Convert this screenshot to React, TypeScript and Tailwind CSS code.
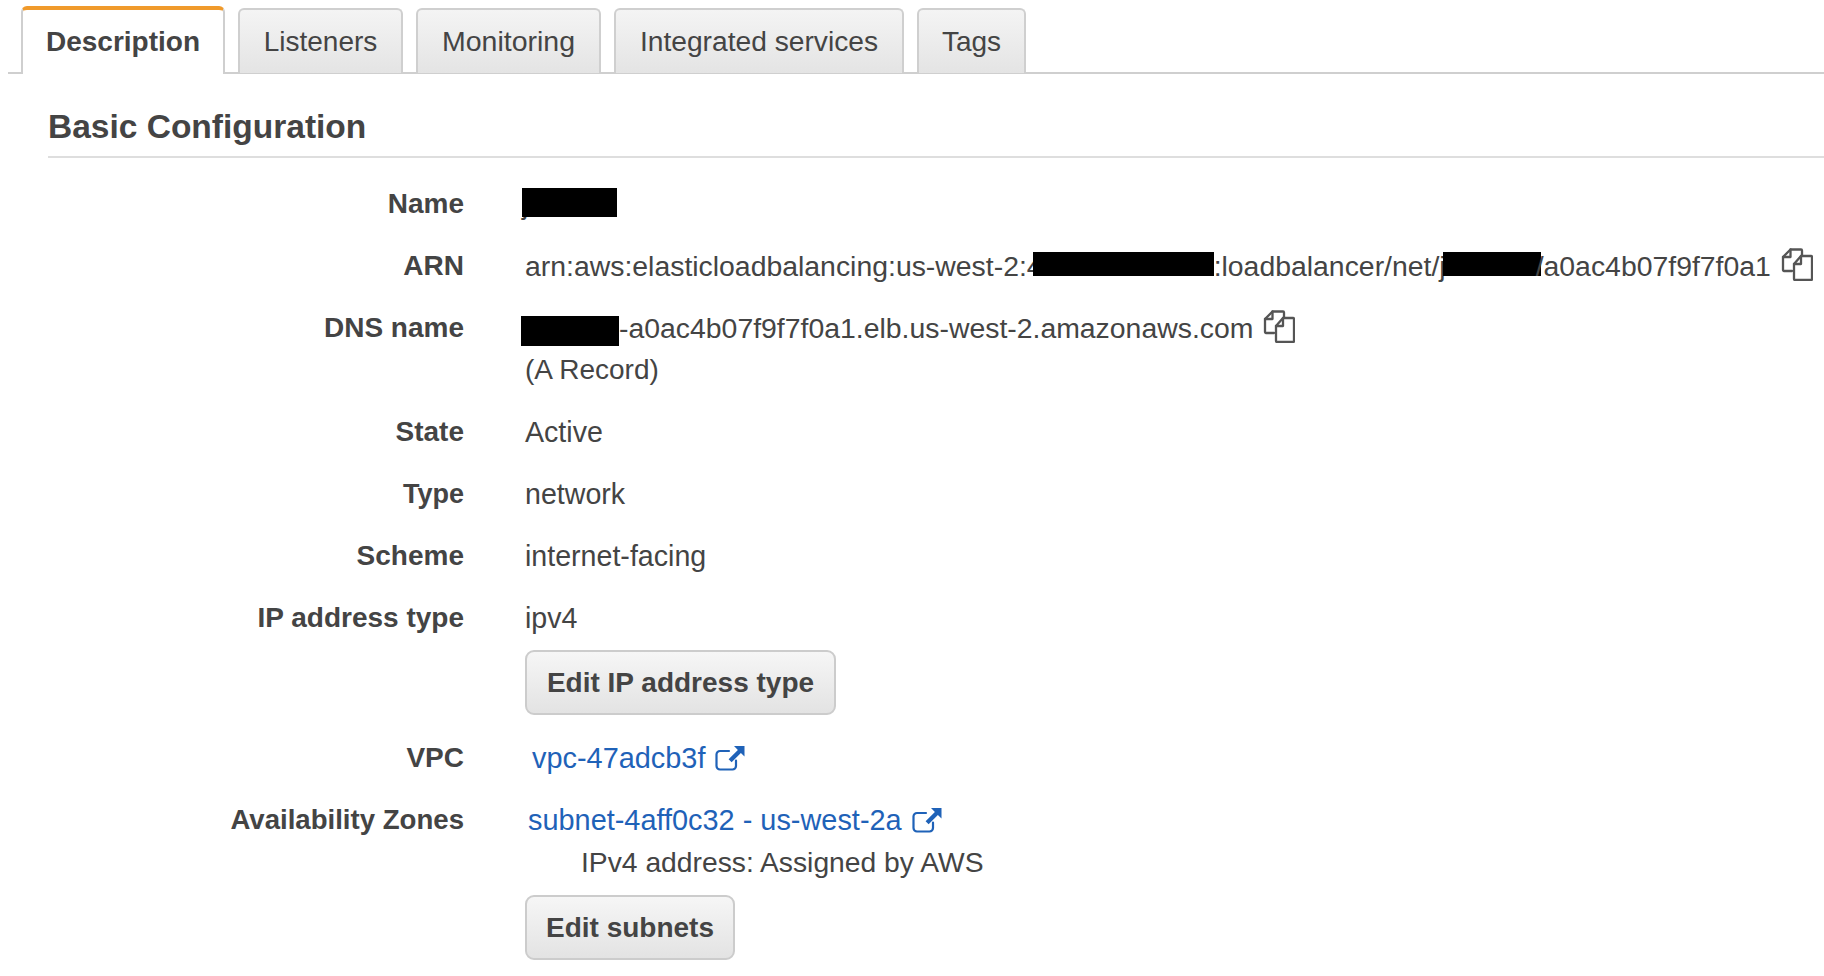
const Copy = ({ className }: { className: string }) => (
  <svg className={className} viewBox="0 0 32 33" fill="none" stroke="#555" strokeWidth="2.3" strokeLinejoin="round" strokeLinecap="round">
    <path d="M11 23H3a1 1 0 0 1-1-1V9l7.5-7.5H20a1 1 0 0 1 1 1V7" />
    <path d="M9.5 1.5V9H2" />
    <path d="M20 8h10a1 1 0 0 1 1 1v22a1 1 0 0 1-1 1H14a1 1 0 0 1-1-1V16z" />
    <path d="M20 8v8h-7" />
  </svg>
);

const External = () => (
  <svg className="ml-[10px] w-[30px] h-[25px] shrink-0" viewBox="0 0 30 25" fill="none">
    <path d="M21 14.5v5.5a3.5 3.5 0 0 1-3.5 3.5H5a3.5 3.5 0 0 1-3.5-3.5V8.5A3.5 3.5 0 0 1 5 5h9" stroke="#1f62b8" strokeWidth="2.2" strokeLinecap="round" />
    <path d="M19 0h10.5v10.5l-3.6-3.6-9.3 9.3-3-3 9.3-9.3z" fill="#1f62b8" />
  </svg>
);

const Tab = ({ children, w, size }: { children: string; w: string; size: string }) => (
  <div className={`${w} ${size} h-[65px] mt-[8px] box-border flex items-center justify-center rounded-t-[6px] border-2 border-b-0 border-[#cfcfcf] bg-gradient-to-b from-[#f4f4f4] to-[#e4e4e4] text-[#444]`}>
    {children}
  </div>
);

const Row = ({ label, size = "text-[28px]", children }: { label: string; size?: string; children: React.ReactNode }) => (
  <div className="flex py-[10px] leading-[42px]">
    <div className={`w-[464px] shrink-0 text-right font-bold ${size}`}>{label}</div>
    <div className="pl-[61px] whitespace-nowrap min-w-0">{children}</div>
  </div>
);

const Bar = ({ cls }: { cls: string }) => (
  <span className={`block bg-black self-start shrink-0 ${cls}`} />
);

const Btn = ({ children, w, mt }: { children: string; w: string; mt: string }) => (
  <div className={`${w} ${mt} h-[65px] box-border flex items-center justify-center rounded-[9px] border-2 border-[#cccccc] bg-gradient-to-b from-[#f6f6f6] to-[#e3e3e3] font-bold text-[28px] text-[#444]`}>
    {children}
  </div>
);

export default function App() {
  return (
    <div className="w-[1824px] h-[976px] overflow-hidden bg-white text-[#444] text-[28.4px] font-['Liberation_Sans',Arial,sans-serif]">
      <div className="ml-[8px] h-[74px] flex gap-[13px] pl-[13px] border-b-2 border-[#cfcfcf] box-border">
        <div className="w-[204px] h-[68px] mt-[6px] box-border flex items-center justify-center rounded-t-[6px] border-x-2 border-t-4 border-[#cfcfcf] border-t-[#f09a2b] bg-white font-bold text-[28px]">
          Description
        </div>
        <Tab w="w-[165px]" size="text-[28px]">Listeners</Tab>
        <Tab w="w-[185px]" size="text-[28.5px]">Monitoring</Tab>
        <Tab w="w-[290px]" size="text-[28.2px]">Integrated services</Tab>
        <Tab w="w-[109px]" size="text-[28px]">Tags</Tab>
      </div>

      <div className="ml-[48px] pt-[33px] pb-[9px] border-b-2 border-[#dedede] font-bold text-[33.5px] leading-[40px]">
        Basic Configuration
      </div>

      <div className="mt-[15px]">
        <Row label="Name">
          <span className="inline-flex relative w-[95px] h-[42px] -ml-[3px]">
            <span>j</span>
            <span className="absolute left-0 top-[5px] w-[95px] h-[29px] bg-black" />
          </span>
        </Row>
        <Row label="ARN">
          <div className="flex items-center">
            <span>arn:aws:elasticloadbalancing:us-west-2:4</span>
            <Bar cls="w-[181px] h-[24px] -ml-[10px] mt-[7px]" />
            <span>:loadbalancer/net/j</span>
            <Bar cls="w-[98px] h-[24px] -ml-[3px] mt-[7px]" />
            <span className="-ml-[5px]">/a0ac4b07f9f7f0a1</span>
            <Copy className="ml-[10px] w-[32px] h-[33px] -mt-[4px]" />
          </div>
        </Row>
        <Row label="DNS name">
          <div className="flex items-center -ml-[4px]">
            <Bar cls="w-[98px] h-[30px] mt-[9px]" />
            <span>-a0ac4b07f9f7f0a1.elb.us-west-2.amazonaws.com</span>
            <Copy className="ml-[10px] w-[32px] h-[33px] -mt-[4px]" />
          </div>
          <div className="text-[28px]">(A Record)</div>
        </Row>
        <Row label="State"><span className="text-[28.6px]">Active</span></Row>
        <Row label="Type" size="text-[27px]"><span className="text-[28.6px]">network</span></Row>
        <Row label="Scheme"><span className="text-[28.6px]">internet-facing</span></Row>
        <Row label="IP address type">
          <div className="text-[28.6px]">ipv4</div>
          <Btn w="w-[311px]" mt="mt-[11px]">Edit IP address type</Btn>
        </Row>
        <div className="h-[2px]" />
        <Row label="VPC">
          <div className="flex items-center ml-[7px] text-[#1f62b8] text-[28.9px]">
            vpc-47adcb3f
            <External />
          </div>
        </Row>
        <Row label="Availability Zones" size="text-[27.6px]">
          <div className="flex items-center ml-[3px] text-[#1f62b8] text-[28.9px]">
            subnet-4aff0c32 - us-west-2a
            <External />
          </div>
          <div className="pl-[56px] text-[28.25px]">IPv4 address: Assigned by AWS</div>
          <Btn w="w-[210px]" mt="mt-[12px]">Edit subnets</Btn>
        </Row>
      </div>
    </div>
  );
}
